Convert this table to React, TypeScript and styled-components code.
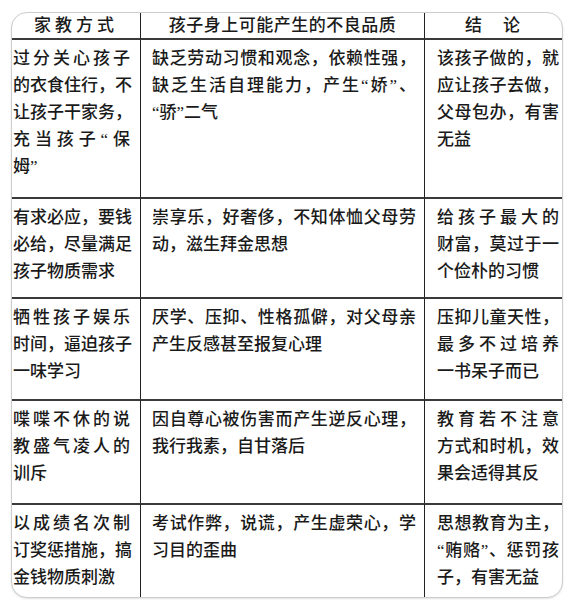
import React from 'react';
import styled, { createGlobalStyle } from 'styled-components';

const GlobalStyle = createGlobalStyle`
  html, body {
    margin: 0;
    padding: 0;
    background: #ffffff;
  }
  body {
    font-family: "Liberation Serif", "Noto Sans CJK SC", serif;
    color: #1a1a1a;
  }
`;

const Page = styled.div`
  width: 576px;
  height: 608px;
  padding: 12px 13px 10px 11px;
  box-sizing: border-box;
`;

const Card = styled.div`
  width: 552px;
  height: 586px;
  box-sizing: border-box;
  border: 1px solid #cdcdcd;
  border-radius: 16px;
  overflow: hidden;
  background: #ffffff;
  box-shadow: 0 1px 2px rgba(0, 0, 0, 0.12);
  display: grid;
  grid-template-columns: 128px 284px 138px;
  grid-template-rows: 27px 157px 100px 102px 104px 1fr;
`;

const pads = ['5px 10px 0 1px', '5px 8px 0 11px', '5px 3px 0 12px'];

const HeadCell = styled.div<{ $col: number; $spacing: number }>`
  min-width: 0;
  border-left: ${p => (p.$col > 0 ? '1px solid #222' : 'none')};
  border-bottom: 2px solid #3a3a3a;
  box-sizing: border-box;
  display: flex;
  align-items: center;
  justify-content: center;
  font-size: 17px;
  font-weight: 500;
  letter-spacing: ${p => p.$spacing}px;
  line-height: 1;
`;

const Cell = styled.div<{ $col: number; $first: boolean }>`
  min-width: 0;
  overflow: hidden;
  border-left: ${p => (p.$col > 0 ? '1px solid #222' : 'none')};
  border-top: ${p => (p.$first ? 'none' : '2px solid #3a3a3a')};
  box-sizing: border-box;
  padding: ${p => pads[p.$col]};
  font-size: 17px;
  font-weight: 500;
  line-height: 27px;
`;

const Line = styled.div<{ $full: boolean }>`
  white-space: nowrap;
  text-align: ${p => (p.$full ? 'justify' : 'left')};
  text-align-last: ${p => (p.$full ? 'justify' : 'left')};
`;

const headers = [
  { text: '家教方式', spacing: 4 },
  { text: '孩子身上可能产生的不良品质', spacing: 0.5 },
  { text: '结　论', spacing: 2 },
];

const rows: string[][][] = [
  [
    ['过分关心孩子', '的衣食住行，不', '让孩子干家务，', '充当孩子“保', '姆”'],
    ['缺乏劳动习惯和观念，依赖性强，', '缺乏生活自理能力，产生“娇”、', '“骄”二气'],
    ['该孩子做的，就', '应让孩子去做，', '父母包办，有害', '无益'],
  ],
  [
    ['有求必应，要钱', '必给，尽量满足', '孩子物质需求'],
    ['崇享乐，好奢侈，不知体恤父母劳', '动，滋生拜金思想'],
    ['给孩子最大的', '财富，莫过于一', '个俭朴的习惯'],
  ],
  [
    ['牺牲孩子娱乐', '时间，逼迫孩子', '一味学习'],
    ['厌学、压抑、性格孤僻，对父母亲', '产生反感甚至报复心理'],
    ['压抑儿童天性，', '最多不过培养', '一书呆子而已'],
  ],
  [
    ['喋喋不休的说', '教盛气凌人的', '训斥'],
    ['因自尊心被伤害而产生逆反心理，', '我行我素，自甘落后'],
    ['教育若不注意', '方式和时机，效', '果会适得其反'],
  ],
  [
    ['以成绩名次制', '订奖惩措施，搞', '金钱物质刺激'],
    ['考试作弊，说谎，产生虚荣心，学', '习目的歪曲'],
    ['思想教育为主，', '“贿赂”、惩罚孩', '子，有害无益'],
  ],
];

const App = () => {
  return (
    <>
      <GlobalStyle />
      <Page>
        <Card>
          {headers.map((h, i) => (
            <HeadCell key={h.text} $col={i} $spacing={h.spacing}>
              {h.text}
            </HeadCell>
          ))}
          {rows.map((row, r) =>
            row.map((lines, c) => (
              <Cell key={`${r}-${c}`} $col={c} $first={r === 0}>
                {lines.map((line, k) => (
                  <Line key={k} $full={k < lines.length - 1}>
                    {line}
                  </Line>
                ))}
              </Cell>
            ))
          )}
        </Card>
      </Page>
    </>
  );
};

export default App;
